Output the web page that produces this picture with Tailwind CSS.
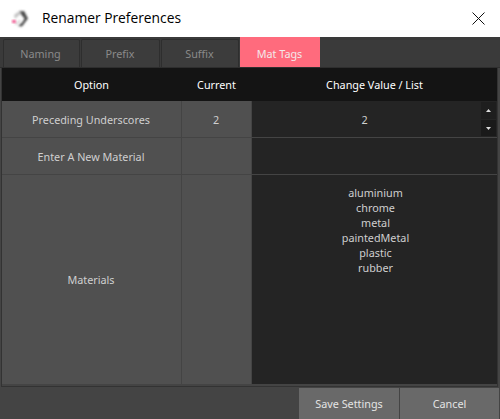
<!DOCTYPE html>
<html>
<head>
<meta charset="utf-8">
<script src="https://cdn.jsdelivr.net/npm/@tailwindcss/browser@4"></script>
</head>
<body class="m-0 h-[419px] w-[500px] overflow-hidden bg-[#444444] font-['Noto_Sans',sans-serif]">
<div class="flex h-[37px] items-center bg-white">
  <svg class="ml-[9px] h-[26px] w-[26px]" viewBox="0 0 26 26"><defs><filter id="b" x="-30%" y="-30%" width="160%" height="160%"><feGaussianBlur stdDeviation="0.8"/></filter></defs><path d="M5 9 L11 4.5 L14 6 L8 11 L6 13 Z" fill="#c4c4c4" filter="url(#b)"/><path d="M11 5.5 L15 5 L19 12.5 L13 20.5 L9 20 L13.5 16 L15.5 12.5 L12.5 9 Z" fill="#4a4a4a" filter="url(#b)"/><path d="M5 18 L11 13.5 L12 15 L8 19 Z" fill="#d8d8d8" filter="url(#b)"/><rect x="3.2" y="14" width="3.6" height="3" fill="#f0508a" filter="url(#b)"/></svg>
  <span class="ml-[7px] font-['Open_Sans',sans-serif] text-[13.8px] text-black">Renamer Preferences</span>
  <svg class="ml-auto mr-[15px] h-[13px] w-[13px]" viewBox="0 0 13 13"><path d="M0.5 0.5 L12.5 12.5 M12.5 0.5 L0.5 12.5" stroke="#111" stroke-width="1" fill="none"/></svg>
</div>
<div class="flex h-[31px] items-stretch gap-[1px] border-b border-[#2e2e2e] bg-[#3a3a3a] pl-[3px] pt-[2px] text-[10.8px] text-[#8a8a8a]">
  <div class="flex w-[77px] items-center justify-center rounded-t-[2px] border border-b-0 border-[#2e2e2e] bg-[#3c3c3c] pr-[2px] pt-[2px]">Naming</div>
  <div class="flex w-[79px] items-center justify-center rounded-t-[2px] border border-b-0 border-[#2e2e2e] bg-[#3c3c3c] pr-[1px] pt-[2px]">Prefix</div>
  <div class="flex w-[78px] items-center justify-center rounded-t-[2px] border border-b-0 border-[#2e2e2e] bg-[#3c3c3c] pr-[1px] pt-[2px]">Suffix</div>
  <div class="-mt-[2px] flex w-[80px] items-center justify-center bg-[#ff6b7d] pr-[1px] pt-[4px] text-[#f4e8ea]">Mat Tags</div>
</div>
<div class="h-[319px] pl-[1px] pr-[2px] text-[10.8px] text-[#cfcfcf]">
  <div class="h-[319px] border-x border-b border-[#333333] pb-[2px]">
    <div class="grid h-[316px] grid-cols-[180px_70px_1fr] grid-rows-[33px_37px_37px_1fr]">
      <div class="flex items-center justify-center bg-[#141414] pr-[1px] pt-[2px] text-white">Option</div>
      <div class="flex items-center justify-center bg-[#141414] pr-[1px] pt-[2px] text-white">Current</div>
      <div class="flex items-center justify-center bg-[#141414] pt-[2px] text-white">Change Value / List</div>

      <div class="flex items-center justify-center border-r border-b border-[#444444] bg-[#505050] pr-[1px] pt-[2px]">Preceding Underscores</div>
      <div class="flex items-center justify-center border-r border-b border-[#444444] bg-[#505050] pr-[1px] pt-[2px]">2</div>
      <div class="relative flex items-center justify-center border-b border-[#444444] bg-[#242424] pr-[20px] pt-[2px]">
        2
        <div class="absolute right-[1px] top-[1px] flex flex-col gap-[1px]">
          <div class="flex h-[17px] w-[15px] items-center justify-center bg-[#1e1e1e]"><svg class="h-[3px] w-[5px]" viewBox="0 0 5 3"><path d="M2.5 0 L5 3 L0 3 Z" fill="#ddd"/></svg></div>
          <div class="flex h-[16px] w-[15px] items-center justify-center bg-[#1a1a1a]"><svg class="h-[3px] w-[5px]" viewBox="0 0 5 3"><path d="M0 0 L5 0 L2.5 3 Z" fill="#ddd"/></svg></div>
        </div>
      </div>

      <div class="flex items-center justify-center border-r border-b border-[#444444] bg-[#505050] pr-[1px] pt-[2px]">Enter A New Material</div>
      <div class="border-r border-b border-[#444444] bg-[#505050]"></div>
      <div class="border-b border-[#444444] bg-[#242424]"></div>

      <div class="flex items-center justify-center border-r border-[#444444] bg-[#505050] pr-[1px] pt-[2px]">Materials</div>
      <div class="border-r border-[#444444] bg-[#505050]"></div>
      <div class="bg-[#242424] pl-[2px] pt-[10px] text-center leading-[15px]">
        <div>aluminium</div><div>chrome</div><div>metal</div><div>paintedMetal</div><div>plastic</div><div>rubber</div>
      </div>
    </div>
  </div>
</div>
<div class="flex h-[32px] justify-end gap-[1px] pr-[1px] pt-[1px] text-[10.8px] text-[#e4e4e4]">
  <div class="flex w-[100px] items-center justify-center bg-[#696969] pt-[2px]">Save Settings</div>
  <div class="flex w-[99px] items-center justify-center bg-[#696969] pt-[2px]">Cancel</div>
</div>
</body>
</html>
